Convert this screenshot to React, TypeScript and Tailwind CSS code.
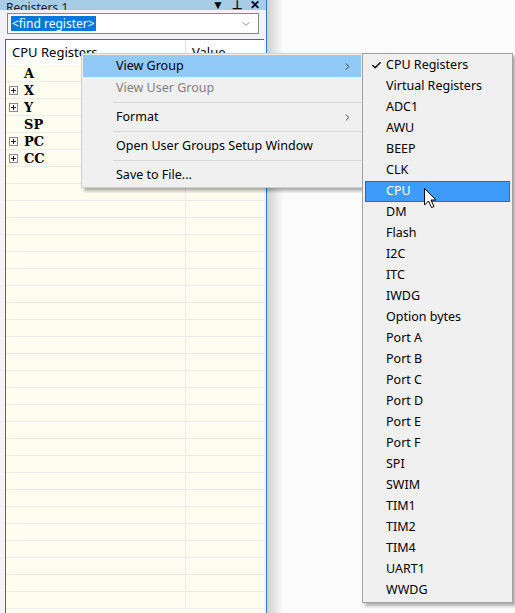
import { Check, ChevronDown, ChevronRight } from "lucide-react";

const registers = [
  { name: "A", expandable: false },
  { name: "X", expandable: true },
  { name: "Y", expandable: true },
  { name: "SP", expandable: false },
  { name: "PC", expandable: true },
  { name: "CC", expandable: true },
];

const groups = [
  "CPU Registers",
  "Virtual Registers",
  "ADC1",
  "AWU",
  "BEEP",
  "CLK",
  "CPU",
  "DM",
  "Flash",
  "I2C",
  "ITC",
  "IWDG",
  "Option bytes",
  "Port A",
  "Port B",
  "Port C",
  "Port D",
  "Port E",
  "Port F",
  "SPI",
  "SWIM",
  "TIM1",
  "TIM2",
  "TIM4",
  "UART1",
  "WWDG",
];

const emptyRows = Array.from({ length: 26 }, (_, i) => i);

function ExpandBox() {
  return (
    <span className="flex h-[9px] w-[9px] items-center justify-center border border-[#8c8c8c] bg-white">
      <svg width="7" height="7" viewBox="0 0 7 7">
        <path d="M1 3.5h5M3.5 1v5" stroke="#222" strokeWidth="1" />
      </svg>
    </span>
  );
}

function Cursor() {
  return (
    <svg width="13" height="21" viewBox="0 0 13 21" className="absolute left-[424px] top-[188px]">
      <path
        d="M0.5 0.5 L0.5 17 L4.5 13 L7.5 19.5 L10 18.5 L7 12 L12 12 Z"
        fill="white"
        stroke="black"
        strokeWidth="1"
        strokeLinejoin="miter"
      />
    </svg>
  );
}

function MenuSeparator() {
  return <div className="my-[3px] ml-[30px] h-px bg-[#d7d7d7]" />;
}

export default function App() {
  return (
    <div className="relative h-[613px] w-[515px] overflow-hidden bg-[#fbfbfb] font-['Noto_Sans',sans-serif] text-[12.5px] text-black">
      <div className="flex h-full">
        <div className="flex h-full w-[266px] flex-col bg-[#f2f2f8]">
          <div className="flex h-[10px] items-end justify-between overflow-hidden bg-[#a6cde5] pl-[6px] pr-[6px]">
            <span className="mb-[-5px] text-[12px] leading-[14px] text-[#1a1a1a]">Registers 1</span>
            <div className="mb-[-1px] flex items-end gap-[8px] text-[12px] font-bold leading-[12px]">
              <span>▼</span>
              <span>⊥</span>
              <span>✕</span>
            </div>
          </div>
          <div className="px-[7px] pt-[3px]">
            <div className="flex h-[21px] items-center justify-between border border-[#7e8e7e] bg-white pl-[3px] pr-[6px]">
              <span className="bg-[#0078d7] px-[1px] text-[12px] leading-[15px] text-white">&lt;find register&gt;</span>
              <ChevronDown size={12} strokeWidth={1.5} className="text-[#606060]" />
            </div>
          </div>
          <div className="mt-[5px] flex flex-1 pl-[5px]">
            <div className="flex-1 border-l border-t border-[#6b5a7a] bg-[#fdfdef]">
              <div className="flex h-[25px] bg-white">
                <div className="w-[180px] border-r border-[#e5e5e5] pl-[6px] pt-[3px] text-[13px]">CPU Registers</div>
                <div className="pl-[6px] pt-[3px] text-[13px]">Value</div>
              </div>
              {registers.map((reg) => (
                <div key={reg.name} className="flex h-[17px] border-b border-[#ececec]">
                  <div className="flex w-[180px] items-center gap-[6px] border-r border-[#ececec] pl-[3px]">
                    <span className="w-[9px]">{reg.expandable && <ExpandBox />}</span>
                    <span className="font-['DejaVu_Serif',serif] text-[13px] font-bold leading-[15px]">{reg.name}</span>
                  </div>
                </div>
              ))}
              {emptyRows.map((i) => (
                <div key={i} className="flex h-[17px] border-b border-[#ececec]">
                  <div className="w-[180px] border-r border-[#ececec]" />
                </div>
              ))}
            </div>
            <div className="w-[2px] bg-[#f2f2f8]" />
          </div>
        </div>
        <div className="w-[1px] bg-[#1c7fe0]" />
        <div className="h-full w-[16px] bg-gradient-to-r from-[#d0d0d0] to-[#fbfbfb]" />
      </div>

      <div className="absolute left-[81px] top-[53px] w-[282px] border border-[#cfcfcf] bg-[#f0f0f0] py-[1px] pl-[1px] pr-[1px] shadow-[3px_3px_3px_rgba(0,0,0,0.3)]">
        <div className="flex h-[22px] items-center justify-between bg-[#91c9f7] pl-[33px] pr-[8px]">
          <span>View Group</span>
          <ChevronRight size={11} strokeWidth={1.5} />
        </div>
        <div className="flex h-[22px] items-center pl-[33px] text-[#7f7f7f]">View User Group</div>
        <MenuSeparator />
        <div className="flex h-[22px] items-center justify-between pl-[33px] pr-[8px]">
          <span>Format</span>
          <ChevronRight size={11} strokeWidth={1.5} />
        </div>
        <MenuSeparator />
        <div className="flex h-[22px] items-center pl-[33px]">Open User Groups Setup Window</div>
        <MenuSeparator />
        <div className="flex h-[22px] items-center pl-[33px]">Save to File...</div>
      </div>

      <div className="absolute left-[362px] top-[53px] w-[151px] border border-[#a0a0a0] bg-[#f0f0f0] px-[2px] py-[1px] shadow-[3px_3px_3px_rgba(0,0,0,0.3)]">
        {groups.map((g, i) => (
          <div
            key={g}
            className={
              g === "CPU"
                ? "relative flex h-[21px] items-center border border-[#1e6fc4] bg-[#3d9bfa] pl-[20px] text-white"
                : "relative flex h-[21px] items-center pl-[21px]"
            }
          >
            {i === 0 && <Check size={11} strokeWidth={3} className="absolute left-[6px]" />}
            {g}
          </div>
        ))}
      </div>

      <Cursor />
    </div>
  );
}
